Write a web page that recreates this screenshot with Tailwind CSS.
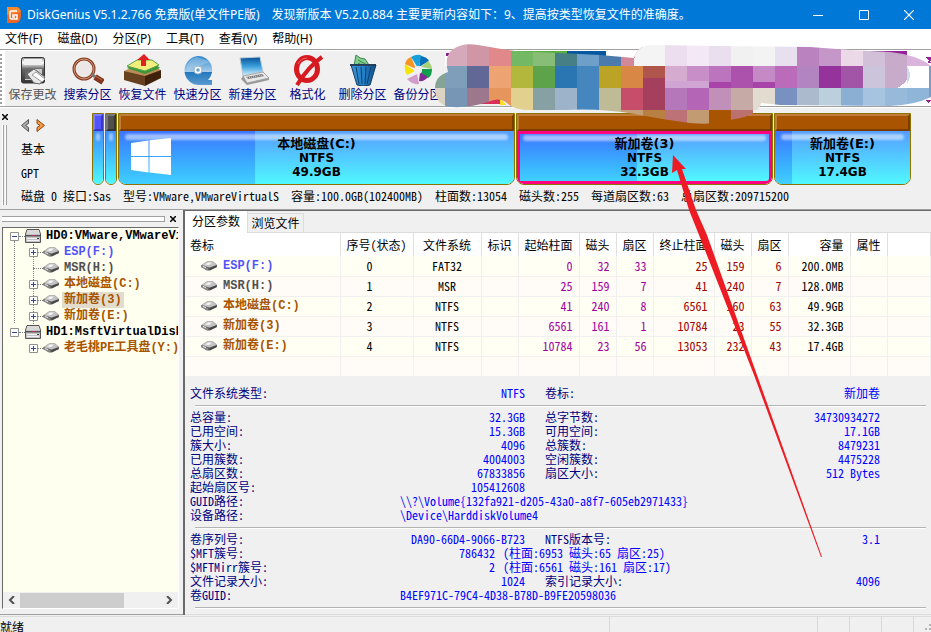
<!DOCTYPE html>
<html lang="zh-CN">

<head>
  <meta charset="UTF-8">
  <meta name="viewport" content="width=device-width, initial-scale=1.0">
  <title>DiskGenius V5.1.2.766 免费版(单文件PE版)</title>
  <script src="https://cdn.jsdelivr.net/npm/@tailwindcss/browser@4"></script>
</head>

<body class="relative flex flex-col h-screen overflow-hidden bg-[#f0f0f0] text-black text-[12px] leading-[14px] whitespace-nowrap font-['Noto_Sans_Mono_CJK_SC','Liberation_Mono','Noto_Sans_CJK_SC',monospace]">

  <!-- Shared icons -->
  <svg class="absolute w-0 h-0" aria-hidden="true">
    <symbol id="drive" viewBox="0 0 16 10">
      <path d="M0 4.500 6 .5h6l4 3.500v2L9 9.500H6L0 6z" fill="#666" />
      <path d="M.5 4 6 .8h6L15.500 4 8.500 6.500z" fill="#c4c4c4" />
      <path d="M4 3.500 7 1.500h4L8 4z" fill="#f5f5f5" />
      <path d="M0 4.500 7 7v2.500L0 6z" fill="#8a8a8a" />
      <path d="M8 7.500 15.500 4.500V6L9 9z" fill="#444" />
      <path d="M2 5.500 5 6.500" stroke="#eee" />
    </symbol>
    <symbol id="disk" viewBox="0 0 16 14">
      <path d="M2 .5h12L15.500 5v8.500H.5V5z" fill="#c4c4c4" stroke="#555" />
      <path d="M2 2h12M1.500 4h13" stroke="#eee" />
      <path d="M1 6h14v1.500H1z" fill="#555" />
      <path d="M2 9.500h12M2 11.500h12" stroke="#f2f2f2" />
      <path d="M7 6.500h3" stroke="#b36" />
      <path d="M12 9.500h2" stroke="#444" />
    </symbol>
    <symbol id="plus" viewBox="0 0 9 9">
      <path d="M.5.5h8v8h-8z" fill="#fff" stroke="#919191" />
      <path d="M2 4.500h5M4.500 2v5" stroke="#2c4a8c" />
    </symbol>
    <symbol id="minus" viewBox="0 0 9 9">
      <path d="M.5.5h8v8h-8z" fill="#fff" stroke="#919191" />
      <path d="M2 4.500h5" stroke="#2c4a8c" />
    </symbol>
    <linearGradient id="steel" x2="0" y2="1"><stop stop-color="#888" /><stop offset=".2" stop-color="#fff" /><stop offset=".45" stop-color="#666" /><stop offset="1" stop-color="#333" /></linearGradient>
    <linearGradient id="disc" x2="0" y2="1"><stop stop-color="#2f87cc" /><stop offset=".55" stop-color="#a9cdea" /><stop offset=".56" stop-color="#2377bd" /><stop offset="1" stop-color="#5b9bd0" /></linearGradient>
    <linearGradient id="screen" x2="0" y2="1"><stop stop-color="#064f96" /><stop offset=".5" stop-color="#3da1dc" /><stop offset="1" stop-color="#d9f1fc" /></linearGradient>
    <linearGradient id="bin" x2="1"><stop stop-color="#3d93d5" /><stop offset=".5" stop-color="#2380c8" /><stop offset="1" stop-color="#114e8a" /></linearGradient>
  </svg>

  <header class="flex items-center shrink-0 h-[29px] pl-[6px] bg-[#0078d7] text-white font-['Noto_Sans','Noto_Sans_CJK_SC',sans-serif]">
    <svg class="w-4 h-4 mr-[5px]" viewBox="0 0 16 16">
      <path d="M1 0h9c4 0 5 3 5 8s-2 8-6 8H1z" fill="#ef6524" />
      <path d="M1 0h9c3 0 4 2 5 5L1 8z" fill="#f8892d" />
      <path d="M11 4H5.500Q4 4 4 5.500v5Q4 12 5.500 12H11V8H7v2h2" fill="none" stroke="#fff" stroke-width="1.500" />
    </svg>
    <h1 class="flex grow gap-3"><span>DiskGenius V5.1.2.766 免费版(单文件PE版)</span><span>发现新版本 V5.2.0.884 主要更新内容如下：9、提高按类型恢复文件的准确度。</span></h1>
    <button type="button" aria-label="最小化" class="flex items-center justify-center w-[46px] h-full"><svg class="w-[10px] h-[10px]" viewBox="0 0 10 10"><path d="M0 5.500h10" stroke="#fff" /></svg></button>
    <button type="button" aria-label="最大化" class="flex items-center justify-center w-[45px] h-full"><svg class="w-[10px] h-[10px]" viewBox="0 0 10 10"><path d="M.5.5h9v9h-9z" fill="none" stroke="#fff" /></svg></button>
    <button type="button" aria-label="关闭" class="flex items-center justify-center w-[45px] h-full"><svg class="w-[10px] h-[10px]" viewBox="0 0 10 10"><path d="M0 0l10 10M10 0L0 10" stroke="#fff" stroke-width="1.200" /></svg></button>
  </header>

  <nav class="flex items-center shrink-0 h-5 pl-[5px] gap-[15px] bg-white font-['Noto_Sans','Noto_Sans_CJK_SC',sans-serif]">
    <button type="button">文件(F)</button>
    <button type="button">磁盘(D)</button>
    <button type="button">分区(P)</button>
    <button type="button">工具(T)</button>
    <button type="button">查看(V)</button>
    <button type="button">帮助(H)</button>
  </nav>

  <!-- Toolbar -->
  <section class="flex shrink-0 h-[58px] border-t border-b border-[#a0a0a0] text-[#000080]">
    <div class="w-[5px] pt-1 bg-white"><div class="h-[50px] w-[2px] border-l-2 border-dotted border-[#a0a0a0]"></div></div>
    <div class="flex border-t border-white">
      <button type="button" class="flex flex-col items-center w-[55px] pt-[3px] text-[#555]">
        <svg class="w-8 h-8 mb-px" viewBox="0 0 32 32">
          <path d="M4.500 5.500q0-2 2-2h19q2 0 2 2v22q0 1.500-2 1.500h-19q-2 0-2-1.500z" fill="url(#steel)" stroke="#333" />
          <path d="M7 5h18v6H7z" fill="#f0f0f0" />
          <path d="M8 15h17v11H8z" fill="#ccc" /><path d="M8 15h8v10H8z" fill="#666" />
          <path d="M10 20l7-5 11 8-5 7-6-1z" fill="#e8e8e8" stroke="#666" /><path d="M15 21l4-3 9 7-3 3z" fill="#fff" stroke="#999" />
        </svg>保存更改</button>
      <button type="button" class="flex flex-col items-center w-[55px] pt-[3px]">
        <svg class="w-8 h-8 mb-px" viewBox="0 0 32 32">
          <circle cx="12" cy="15" r="10" fill="#ece7e4" stroke="#843e24" stroke-width="3" />
          <circle cx="12" cy="15" r="10" fill="none" stroke="#d99574" />
          <path d="M20 20l3 3" stroke="#777" stroke-width="3" /><path d="M23 23l8 5" stroke="#84351d" stroke-width="6" /><path d="M23 22l7 4" stroke="#bf6a42" />
        </svg>搜索分区</button>
      <button type="button" class="flex flex-col items-center w-[55px] pt-[3px]">
        <svg class="w-[38px] h-8 mb-px" viewBox="0 0 38 32">
          <path d="M0 17l11-5h17l9 4-16 8z" fill="#b98b55" /><path d="M0 17l21 5v10L0 26z" fill="#67401f" /><path d="M21 22l16-6v8l-16 8z" fill="#3f210c" />
          <path d="M3 14l10-7h15l8 7-15 6z" fill="#3d963b" /><path d="M3 12l10-6h15l7 5-14 6z" fill="#f4ec7b" stroke="#55a54a" />
          <path d="M17 12V6h-4l7-6 6 6h-4v6z" fill="#e02024" />
        </svg>恢复文件</button>
      <button type="button" class="flex flex-col items-center w-[55px] pt-[3px]">
        <svg class="w-8 h-8 mb-px" viewBox="0 0 32 32">
          <path d="M16 2a14 14 0 0 1 10 24h4v5H18A14.500 14.500 0 1 1 16 2z" fill="url(#disc)" />
          <path d="M5 17q10-5 24-9L15 3Q4 5 5 17z" fill="#bfdcf2" opacity=".35" />
          <circle cx="16" cy="16" r="4" fill="#fff" stroke="#9bb8d0" /><circle cx="16" cy="16" r="1.800" fill="#68a3d3" />
        </svg>快速分区</button>
      <button type="button" class="flex flex-col items-center w-[55px] pt-[3px]">
        <svg class="w-8 h-8 mb-px" viewBox="0 0 32 32">
          <path d="M3 4l20-1 3 15-20 4z" fill="url(#screen)" stroke="#b9cbd5" /><path d="M6 22l20-4 6 6-22 5z" fill="#e9e9e9" stroke="#a8a8a8" />
          <path d="M6 22l4 7v2L4 25zM10 29l22-5v2l-22 5z" fill="#999" /><path d="M9 23l16-3 2 2-16 3z" fill="#777" /><path d="M10 24l16-3" stroke="#ddd" stroke-dasharray="1 1" />
        </svg>新建分区</button>
      <button type="button" class="flex flex-col items-center w-[55px] pt-[3px]">
        <svg class="w-8 h-8 mb-px" viewBox="0 0 32 32">
          <ellipse cx="15" cy="15" rx="10.500" ry="11.500" fill="none" stroke="#d71920" stroke-width="5" />
          <path d="M30 3Q17 12 5 31" fill="none" stroke="#d71920" stroke-width="4" /><path d="M6 10q3-6 9-6" fill="none" stroke="#f0666a" />
        </svg>格式化</button>
      <button type="button" class="flex flex-col items-center w-[55px] pt-[3px]">
        <svg class="w-8 h-8 mb-px" viewBox="0 0 32 32">
          <path d="M7 12L9 1q4 4 9 4l6 9z" fill="#83d08c" stroke="#3b7f50" /><path d="M11 6l9 5M11 9l6 3" stroke="#3b7f50" />
          <path d="M4 11h25l-6 20q-7 2-13 0z" fill="url(#bin)" stroke="#183a5c" /><path d="M3 11h26" stroke="#233f5b" stroke-width="2" />
          <path d="M9 13l3 17M14 13l1 17M19 13l-1 17M24 13l-4 17" stroke="#0d426e" stroke-width="1" />
        </svg>删除分区</button>
      <button type="button" class="flex flex-col items-center w-[55px] pt-[3px]">
        <svg class="w-8 h-8 mb-px" viewBox="0 0 32 32">
          <path d="M16 14L9 3q7-4 11-1z" fill="#16a1da" /><path d="M17 13l2-11q6 1 8 5z" fill="#0870b8" /><path d="M19 13l7-6q4 4 4 8z" fill="#a6d075" />
          <path d="M20 15h10q0 7-4 9l-7-5z" fill="#10a04d" /><path d="M18 18l8 5q-4 5-9 4z" fill="#832c91" /><path d="M15 20l2 10q-7 1-12-5z" fill="#d29cca" />
          <path d="M13 17l-8 4q-3-5-2-11z" fill="#f5e400" /><path d="M14 15L3 10q1-5 6-7z" fill="#f69325" /><circle cx="16" cy="16" r="4" fill="#eee" />
        </svg>备份分区</button>
    </div>
    <div class="grow bg-white"></div>
  </section>

  <!-- Disk map -->
  <section class="flex shrink-0 h-[103px] border-t border-t-white border-b border-b-[#a0a0a0]">
    <div class="w-[21px] pt-[6px]">
      <button type="button" aria-label="关闭" class="block ml-[2px]"><svg class="w-[6px] h-[6px]" viewBox="0 0 6 6"><path d="M0 0l6 6M6 0L0 6" stroke="#000" stroke-width="1.500" /></svg></button>
      <div class="flex gap-px w-[6px] h-20 mt-[5px] ml-[2px] *:w-[2px] *:border-r *:border-[#a0a0a0] *:bg-white"><i></i><i></i></div>
    </div>
    <div class="flex flex-col grow pr-5">
      <div class="flex pt-[5px]">
        <div class="w-[71px]">
          <div class="flex gap-[6px] pt-[6px]">
            <button type="button" aria-label="上一个磁盘"><svg class="block w-[9px] h-[13px]" viewBox="0 0 9 13"><path d="M7.500 .5v4l-3 2 3 2v4L.5 6.500z" fill="#aaa" stroke="#555" /></svg></button>
            <button type="button" aria-label="下一个磁盘"><svg class="block w-[9px] h-[13px]" viewBox="0 0 9 13"><path d="M1 .5v4l3 2-3 2v4l7.500-6z" fill="#f79646" stroke="#8a4b14" /></svg></button>
          </div>
          <p class="mt-[10px]">基本</p>
          <p class="mt-[10px]">GPT</p>
        </div>
        <div class="grow grid grid-cols-[12px_12px_397fr_257fr_137fr] gap-px h-[72px] text-center font-bold font-['DejaVu_Sans','Noto_Sans_CJK_SC',sans-serif]">
          <div class="flex flex-col border border-[#8c7300] rounded-b-lg overflow-hidden">
            <div class="h-[17px] border-2 border-t-[#7d7dff] border-l-[#7d7dff] border-r-[#3838c0] border-b-[#3838c0] bg-[#5252ff]"></div>
            <div class="relative grow bg-linear-to-b from-[#408cff] to-[#50f8ff]"><div class="absolute top-[2px] left-[3px] w-1 h-2 rounded-full bg-white/50 blur-[1px]"></div></div>
          </div>
          <div class="flex flex-col border border-[#8c7300] rounded-b-lg overflow-hidden">
            <div class="h-[17px] border-2 border-t-[#777] border-l-[#777] border-r-[#333] border-b-[#333] bg-[#505050]"></div>
            <div class="relative grow bg-linear-to-b from-[#408cff] to-[#50f8ff]"><div class="absolute top-[2px] left-[3px] w-1 h-2 rounded-full bg-white/50 blur-[1px]"></div></div>
          </div>
          <div class="flex flex-col border border-[#8c7300] rounded-b-lg overflow-hidden">
            <div class="h-[17px] border-2 border-t-[#c07c38] border-l-[#c07c38] border-r-[#7c3c00] border-b-[#7c3c00] bg-[#a85400]"></div>
            <div class="relative grow pt-[6px] bg-linear-to-b from-[#559cff] to-[#50f8ff]">
              <div class="absolute inset-y-0 left-0 bg-linear-to-b from-[#3c74ff] to-[#40d0ff]" style="width: 34.5%"></div>
              <div class="absolute top-[3px] inset-x-[6px] h-[6px] rounded-full bg-white/50 blur-[1px]"></div>
              <svg class="absolute left-3 top-[7px] w-10 h-[37px]" viewBox="0 0 40 37"><path d="M0 5l17.500-2.500V18H0zM18.500 2.300 40 0v18H18.500zM0 19h17.500v15.500L0 32zM18.500 19H40v18l-21.500-2.500z" fill="#fff" /></svg>
              <p class="relative"><span class="text-[13px]">本地磁盘(C:)</span><br>NTFS<br>49.9GB</p>
            </div>
          </div>
          <div class="flex flex-col border border-[#8c7300] rounded-b-lg overflow-hidden">
            <div class="h-[17px] border-2 border-t-[#c07c38] border-l-[#c07c38] border-r-[#7c3c00] border-b-[#7c3c00] bg-[#a85400]"></div>
            <div class="relative grow pt-[3px] border-3 border-[#ff0080] rounded-b-md bg-linear-to-b from-[#559cff] to-[#50f8ff]">
              <div class="absolute inset-y-0 left-0 bg-linear-to-b from-[#3c74ff] to-[#40d0ff]" style="width: 47%"></div>
              <div class="absolute top-[1px] inset-x-[3px] h-[6px] rounded-full bg-white/50 blur-[1px]"></div>
              <p class="relative"><span class="text-[13px]">新加卷(3)</span><br>NTFS<br>32.3GB</p>
            </div>
          </div>
          <div class="flex flex-col border border-[#8c7300] rounded-b-lg overflow-hidden">
            <div class="h-[17px] border-2 border-t-[#c07c38] border-l-[#c07c38] border-r-[#7c3c00] border-b-[#7c3c00] bg-[#a85400]"></div>
            <div class="relative grow pt-[6px] bg-linear-to-b from-[#559cff] to-[#50f8ff]">
              <div class="absolute inset-y-0 left-0 bg-linear-to-b from-[#3c74ff] to-[#40d0ff]" style="width: 12.6%"></div>
              <div class="absolute top-[3px] inset-x-[6px] h-[6px] rounded-full bg-white/50 blur-[1px]"></div>
              <p class="relative"><span class="text-[13px]">新加卷(E:)</span><br>NTFS<br>17.4GB</p>
            </div>
          </div>
        </div>
      </div>
      <p class="flex gap-3 mt-1"><span>磁盘 0 接口:Sas</span><span>型号:VMware,VMwareVirtualS</span><span>容量:100.0GB(102400MB)</span><span>柱面数:13054</span><span>磁头数:255</span><span>每道扇区数:63</span><span>总扇区数:209715200</span></p>
    </div>
  </section>

  <div class="flex grow min-h-0">
    <!-- Disk tree -->
    <aside class="flex flex-col shrink-0 w-[183px] border-b border-[#a0a0a0] pl-[2px] pr-1 pb-[5px]">
      <div class="flex items-center shrink-0 h-[17px]">
        <div class="w-[163px] h-[6px] mr-[5px] border-y border-r border-[#a0a0a0] bg-white"></div>
        <button type="button" aria-label="关闭"><svg class="block w-[6px] h-[6px]" viewBox="0 0 6 6"><path d="M0 0l6 6M6 0L0 6" stroke="#000" stroke-width="1.500" /></svg></button>
      </div>
      <div class="flex flex-col grow min-h-0 border border-t-[#696969] border-l-[#696969] border-r-white border-b-white bg-[#fffff0] overflow-hidden">
        <ul class="relative grow font-bold leading-4 overflow-hidden text-[#a85400] font-['Liberation_Mono','Noto_Sans_CJK_SC',monospace]">
          <li class="absolute left-[11px] top-[13px] h-[88px] border-l border-dotted border-[#808080]"></li>
          <li class="absolute left-[30px] top-4 h-24 border-l border-dotted border-[#808080]"></li>
          <li class="relative flex items-center h-4 pl-[7px] text-black"><svg class="w-[9px] h-[9px] shrink-0"><use href="#minus" /></svg><i class="shrink-0 w-[6px] border-t border-dotted border-[#808080]"></i><svg class="w-4 h-[14px] shrink-0 mr-[5px]"><use href="#disk" /></svg>HD0:VMware,VMwareVirtualS</li>
          <li class="relative flex items-center h-4 pl-[26px] text-[#5252ff]"><svg class="w-[9px] h-[9px] shrink-0"><use href="#plus" /></svg><i class="shrink-0 w-[5px] border-t border-dotted border-[#808080]"></i><svg class="w-4 h-[10px] mr-[5px] shrink-0"><use href="#drive" /></svg>ESP(F:)</li>
          <li class="relative flex items-center h-4 pl-[30px] text-[#505050]"><i class="shrink-0 w-[10px] border-t border-dotted border-[#808080]"></i><svg class="w-4 h-[10px] mr-[5px] shrink-0"><use href="#drive" /></svg>MSR(H:)</li>
          <li class="relative flex items-center h-4 pl-[26px]"><svg class="w-[9px] h-[9px] shrink-0"><use href="#plus" /></svg><i class="shrink-0 w-[5px] border-t border-dotted border-[#808080]"></i><svg class="w-4 h-[10px] mr-[5px] shrink-0"><use href="#drive" /></svg>本地磁盘(C:)</li>
          <li class="relative flex items-center h-4 pl-[26px]"><svg class="w-[9px] h-[9px] shrink-0"><use href="#plus" /></svg><i class="shrink-0 w-[5px] border-t border-dotted border-[#808080]"></i><svg class="w-4 h-[10px] mr-[3px] shrink-0"><use href="#drive" /></svg><span class="px-[2px] bg-[#e2dccd]">新加卷(3)</span></li>
          <li class="relative flex items-center h-4 pl-[26px]"><svg class="w-[9px] h-[9px] shrink-0"><use href="#plus" /></svg><i class="shrink-0 w-[5px] border-t border-dotted border-[#808080]"></i><svg class="w-4 h-[10px] mr-[5px] shrink-0"><use href="#drive" /></svg>新加卷(E:)</li>
          <li class="relative flex items-center h-4 pl-[7px] text-black bg-[#fffff0]"><svg class="w-[9px] h-[9px] shrink-0"><use href="#minus" /></svg><i class="shrink-0 w-[6px] border-t border-dotted border-[#808080]"></i><svg class="w-4 h-[14px] shrink-0 mr-[5px]"><use href="#disk" /></svg>HD1:MsftVirtualDisk</li>
          <li class="relative flex items-center h-4 pl-[26px]"><svg class="w-[9px] h-[9px] shrink-0"><use href="#plus" /></svg><i class="shrink-0 w-[5px] border-t border-dotted border-[#808080]"></i><svg class="w-4 h-[10px] mr-[5px] shrink-0"><use href="#drive" /></svg>老毛桃PE工具盘(Y:)</li>
        </ul>
        <div class="flex items-center shrink-0 h-4 px-[5px] bg-[#f0f0f0]">
          <svg class="w-2 h-2 mr-1" viewBox="0 0 8 8"><path d="M6 0L2 4l4 4" fill="none" stroke="#505050" stroke-width="2" /></svg>
          <div class="w-[104px] h-[15px] bg-[#cdcdcd]"></div>
          <svg class="w-2 h-2 ml-auto" viewBox="0 0 8 8"><path d="M2 0l4 4-4 4" fill="none" stroke="#505050" stroke-width="2" /></svg>
        </div>
      </div>
    </aside>

    <main class="flex flex-col grow min-w-0 border-l-2 border-t border-[#696969]">
      <div class="flex items-end shrink-0 h-[22px] border-b border-[#dcdcdc]">
        <button type="button" class="self-stretch w-[63px] -mb-px pb-[3px] bg-white border-r border-[#dcdcdc]">分区参数</button>
        <button type="button" class="h-[19px] w-[56px] border-t border-r border-[#dcdcdc]">浏览文件</button>
      </div>

      <table class="w-full table-fixed text-right">
        <colgroup>
          <col class="w-[155px]"><col class="w-[73px]"><col class="w-[68px]"><col class="w-[37px]"><col class="w-[61px]"><col class="w-[37px]"><col class="w-[37px]"><col class="w-[61px]"><col class="w-[37px]"><col class="w-[37px]"><col class="w-[62px]"><col class="w-[37px]"><col>
        </colgroup>
        <thead>
          <tr class="h-[23px] bg-white *:font-normal *:p-0 *:border-r *:border-[#e0e0e0]">
            <th class="text-left"><span class="pl-[5px]">卷标</span></th>
            <th class="text-center">序号(状态)</th>
            <th class="text-center">文件系统</th>
            <th class="text-center">标识</th>
            <th class="text-center">起始柱面</th>
            <th class="text-center">磁头</th>
            <th class="text-center">扇区</th>
            <th class="text-center">终止柱面</th>
            <th class="text-center">磁头</th>
            <th class="text-center">扇区</th>
            <th><span class="pr-[6px]">容量</span></th>
            <th class="text-center">属性</th>
            <td></td>
          </tr>
        </thead>
        <tbody class="*:h-5 *:odd:bg-[#fffff4] *:even:bg-[#fffcf8] *:*:border-r *:*:border-b *:*:border-[#f0f0f0] *:*:pr-[6px] [&>tr>td:nth-child(2)]:pr-[14px] [&>tr>td:nth-child(3)]:pr-0">
          <tr>
            <td class="font-bold text-[#5252ff] font-['Liberation_Mono','Noto_Sans_CJK_SC',monospace]"><div class="flex items-center gap-[6px] pl-4"><svg class="w-4 h-[10px]"><use href="#drive" /></svg>ESP(F:)</div></td>
            <td class="text-center">0</td><td class="text-center">FAT32</td><td></td>
            <td class="text-[#a000a0]">0</td><td class="text-[#a000a0]">32</td><td class="text-[#a000a0]">33</td>
            <td class="text-[#a00000]">25</td><td class="text-[#a00000]">159</td><td class="text-[#a00000]">6</td>
            <td>200.0MB</td><td></td><td></td>
          </tr>
          <tr>
            <td class="font-bold text-[#505050] font-['Liberation_Mono','Noto_Sans_CJK_SC',monospace]"><div class="flex items-center gap-[6px] pl-4"><svg class="w-4 h-[10px]"><use href="#drive" /></svg>MSR(H:)</div></td>
            <td class="text-center">1</td><td class="text-center">MSR</td><td></td>
            <td class="text-[#a000a0]">25</td><td class="text-[#a000a0]">159</td><td class="text-[#a000a0]">7</td>
            <td class="text-[#a00000]">41</td><td class="text-[#a00000]">240</td><td class="text-[#a00000]">7</td>
            <td>128.0MB</td><td></td><td></td>
          </tr>
          <tr>
            <td class="font-bold text-[#a85400] font-['Liberation_Mono','Noto_Sans_CJK_SC',monospace]"><div class="flex items-center gap-[6px] pl-4"><svg class="w-4 h-[10px]"><use href="#drive" /></svg>本地磁盘(C:)</div></td>
            <td class="text-center">2</td><td class="text-center">NTFS</td><td></td>
            <td class="text-[#a000a0]">41</td><td class="text-[#a000a0]">240</td><td class="text-[#a000a0]">8</td>
            <td class="text-[#a00000]">6561</td><td class="text-[#a00000]">160</td><td class="text-[#a00000]">63</td>
            <td>49.9GB</td><td></td><td></td>
          </tr>
          <tr>
            <td class="font-bold text-[#a85400] font-['Liberation_Mono','Noto_Sans_CJK_SC',monospace]"><div class="flex items-center gap-[6px] pl-4"><svg class="w-4 h-[10px]"><use href="#drive" /></svg>新加卷(3)</div></td>
            <td class="text-center">3</td><td class="text-center">NTFS</td><td></td>
            <td class="text-[#a000a0]">6561</td><td class="text-[#a000a0]">161</td><td class="text-[#a000a0]">1</td>
            <td class="text-[#a00000]">10784</td><td class="text-[#a00000]">23</td><td class="text-[#a00000]">55</td>
            <td>32.3GB</td><td></td><td></td>
          </tr>
          <tr>
            <td class="font-bold text-[#a85400] font-['Liberation_Mono','Noto_Sans_CJK_SC',monospace]"><div class="flex items-center gap-[6px] pl-4"><svg class="w-4 h-[10px]"><use href="#drive" /></svg>新加卷(E:)</div></td>
            <td class="text-center">4</td><td class="text-center">NTFS</td><td></td>
            <td class="text-[#a000a0]">10784</td><td class="text-[#a000a0]">23</td><td class="text-[#a000a0]">56</td>
            <td class="text-[#a00000]">13053</td><td class="text-[#a00000]">232</td><td class="text-[#a00000]">43</td>
            <td>17.4GB</td><td></td><td></td>
          </tr>
          <tr><td></td><td></td><td></td><td></td><td></td><td></td><td></td><td></td><td></td><td></td><td></td><td></td><td></td></tr>
        </tbody>
      </table>

      <!-- Volume details -->
      <section class="grow min-h-0 px-[5px] pt-[9px] text-[#0000ff] border-b border-[#dcdcdc]">
        <dl class="grid grid-cols-[210px_125px_20px_210px_125px] [&_dt]:text-[#000080] [&_dd]:text-right">
          <dt>文件系统类型:</dt><dd>NTFS</dd><dt class="col-start-4">卷标:</dt><dd>新加卷</dd>
        </dl>
        <hr class="h-[2px] mt-[5px] mb-[3px] ml-[5px] border-t-[#b4b4b4] border-b border-b-white">
        <dl class="grid grid-cols-[210px_125px_20px_210px_125px] [&_dt]:text-[#000080] [&_dd]:text-right">
          <dt>总容量:</dt><dd>32.3GB</dd><dt class="col-start-4">总字节数:</dt><dd>34730934272</dd>
          <dt>已用空间:</dt><dd>15.3GB</dd><dt class="col-start-4">可用空间:</dt><dd>17.1GB</dd>
          <dt>簇大小:</dt><dd>4096</dd><dt class="col-start-4">总簇数:</dt><dd>8479231</dd>
          <dt>已用簇数:</dt><dd>4004003</dd><dt class="col-start-4">空闲簇数:</dt><dd>4475228</dd>
          <dt>总扇区数:</dt><dd>67833856</dd><dt class="col-start-4">扇区大小:</dt><dd>512 Bytes</dd>
          <dt>起始扇区号:</dt><dd>105412608</dd>
          <dt class="col-start-1">GUID路径:</dt><dd class="col-span-4"><p class="text-left">\\?\Volume{132fa921-d205-43a0-a8f7-605eb2971433}</p></dd>
          <dt>设备路径:</dt><dd class="col-span-4"><p class="text-left">\Device\HarddiskVolume4</p></dd>
        </dl>
        <hr class="h-[2px] mt-[5px] mb-[3px] ml-[5px] border-t-[#b4b4b4] border-b border-b-white">
        <dl class="grid grid-cols-[210px_125px_20px_210px_125px] [&_dt]:text-[#000080] [&_dd]:text-right">
          <dt>卷序列号:</dt><dd>DA90-66D4-9066-B723</dd><dt class="col-start-4">NTFS版本号:</dt><dd>3.1</dd>
          <dt>$MFT簇号:</dt><dd class="col-span-4 flex gap-2"><span class="w-[95px]">786432</span><span>(柱面:6953 磁头:65 扇区:25)</span></dd>
          <dt>$MFTMirr簇号:</dt><dd class="col-span-4 flex gap-2"><span class="w-[95px]">2</span><span>(柱面:6561 磁头:161 扇区:17)</span></dd>
          <dt>文件记录大小:</dt><dd>1024</dd><dt class="col-start-4">索引记录大小:</dt><dd>4096</dd>
          <dt>卷GUID:</dt><dd class="col-span-4"><p class="text-left">B4EF971C-79C4-4D38-B78D-B9FE20598036</p></dd>
        </dl>
        <hr class="h-[2px] mt-[5px] mb-[3px] ml-[5px] border-t-[#b4b4b4] border-b border-b-white">
      </section>
    </main>
  </div>

  <footer class="flex shrink-0 h-4 mt-px border-t border-[#dcdcdc] font-['Noto_Sans_CJK_SC',sans-serif]">
    <p class="grow pt-[3px]">就绪</p>
    <div class="w-[208px] border-l border-[#d7d7d7]"></div>
    <div class="w-8 border-l border-[#d7d7d7]"></div>
    <div class="w-8 border-l border-[#d7d7d7]"></div>
    <div class="w-8 border-l border-[#d7d7d7]"></div>
    <div class="flex items-end justify-end w-[18px] border-l border-[#d7d7d7]"><svg class="w-[6px] h-[6px] mb-[2px]" viewBox="0 0 6 6"><path d="M4 0h2v2H4zM0 4h2v2H0zM4 4h2v2H4z" fill="#b4b4b4" /></svg></div>
  </footer>

  <!-- Pixelated banner lying over the toolbar and the disk map -->
  <svg class="absolute left-[423px] top-[40px] w-[508px] h-[90px]" viewBox="423 40 508 90" aria-hidden="true" shape-rendering="crispEdges">
    <path d="M445 51h6l-4 6z" fill="#8a1b8a" />
    <path d="M445 51h70v2h-70zM445 66h90v40h-90z" fill="#f0f0f0" />
    <path d="M515 51h52v6h-52z" fill="#5cae3c" /><path d="M567 51h39v8h-39z" fill="#0858a0" />
    <path d="M476 104l24-6v6z" fill="#d82e5a" /><path d="M500 99l6 6h-6z" fill="#fd2" />
    <path d="M855 51h52v4h-52z" fill="#96229a" /><path d="M926 57h5v4h-3v2h3M925 100h6l-3 3z" fill="#96229a" />
    <clipPath id="cloud"><path d="M435 88Q435 76 448 72 444 57 452 50 462 42 478 45 500 49 515 51L600 55 634 58Q638 44 655 45L720 46 810 47 850 50 890 52Q918 55 931 66V97Q915 105 890 106L780 105 761 103Q759 114 740 118L725 121Q710 125 690 123 660 119 635 114 600 108 565 110L530 110Q515 110 508 104 500 96 488 102 470 108 452 107 435 106 435 88z" /></clipPath>
    <g clip-path="url(#cloud)">
      <path d="M423 44h22v44h-22z" fill="#85a496" /><path d="M423 88h22v22h-22z" fill="#dbd2c2" />
      <path d="M445 40h22v26h-22z" fill="#d5a9b9" /><path d="M445 66h22v22h-22z" fill="#7f9eba" /><path d="M445 88h22v22h-22z" fill="#7796b5" />
      <path d="M467 40h22v26h-22z" fill="#d196a6" /><path d="M467 66h22v22h-22z" fill="#616896" /><path d="M467 88h22v22h-22z" fill="#9d788c" />
      <path d="M489 40h22v26h-22z" fill="#e0888a" /><path d="M489 66h22v22h-22z" fill="#eda472" /><path d="M489 88h22v22h-22z" fill="#e6955c" />
      <path d="M511 40h22v26h-22z" fill="#72b865" /><path d="M511 66h22v22h-22z" fill="#b2b83c" /><path d="M511 88h22v22h-22z" fill="#e2d08f" />
      <path d="M533 40h22v26h-22z" fill="#88bd78" /><path d="M533 66h22v22h-22z" fill="#5ea34a" /><path d="M533 88h22v22h-22z" fill="#86a0a4" />
      <path d="M555 40h22v26h-22z" fill="#467f85" /><path d="M555 66h22v22h-22z" fill="#2a76b3" /><path d="M555 88h22v22h-22z" fill="#9cb3ca" />
      <path d="M577 40h22v26h-22z" fill="#6e9fc8" /><path d="M577 66h22v44h-22z" fill="#4586bf" />
      <path d="M599 40h22v26h-22z" fill="#4a7bac" /><path d="M599 66h22v22h-22z" fill="#bba326" /><path d="M599 88h22v24h-22z" fill="#bebb96" />
      <path d="M621 40h22v26h-22z" fill="#d28898" /><path d="M621 66h22v22h-22z" fill="#d98744" /><path d="M621 88h22v22h-22z" fill="#c64e6b" /><path d="M621 110h22v16h-22z" fill="#c4a07a" />
      <path d="M665 40v26h-31q-1-20 16-22z" fill="#f4f4f4" /><path d="M643 66h22v22h-22z" fill="#b0564d" /><path d="M643 78h22v32h-22z" fill="#a53f5e" /><path d="M643 110h22v16h-22z" fill="#b98044" />
      <path d="M665 40h22v26h-22z" fill="#ecdeee" /><path d="M665 66h22v22h-22z" fill="#d5accf" /><path d="M665 88h22v22h-22z" fill="#b377ba" /><path d="M665 110h22v16h-22z" fill="#bd7277" />
      <path d="M687 40h22v26h-22z" fill="#f2e8f6" /><path d="M687 66h22v22h-22z" fill="#c78ec8" /><path d="M687 88h22v22h-22z" fill="#b565b5" /><path d="M687 110h22v16h-22z" fill="#c39b72" />
      <path d="M709 40h22v26h-22z" fill="#eadfee" /><path d="M709 66h22v22h-22z" fill="#bd74be" /><path d="M709 88h22v22h-22z" fill="#c090b8" /><path d="M709 110h22v16h-22z" fill="#a85400" />
      <path d="M731 40h22v26h-22z" fill="#f1f1f2" /><path d="M731 66h22v22h-22z" fill="#ac52ad" /><path d="M731 88h22v22h-22z" fill="#c6aaa6" /><path d="M731 110h22v16h-22z" fill="#bd7070" />
      <path d="M753 40h22v26h-22z" fill="#f3f3f4" /><path d="M753 66h22v22h-22z" fill="#c58ac6" /><path d="M753 88h22v22h-22z" fill="#e1dbd0" />
      <path d="M775 40h22v26h-22z" fill="#e9e0ef" /><path d="M775 66h22v22h-22z" fill="#ba6bba" /><path d="M775 88h22v22h-22z" fill="#7891c0" />
      <path d="M797 40h22v26h-22z" fill="#ba82bf" /><path d="M797 66h22v22h-22z" fill="#b284c0" /><path d="M797 88h22v22h-22z" fill="#acbace" />
      <path d="M819 40h22v26h-22z" fill="#c596c8" /><path d="M819 66h22v22h-22z" fill="#96329b" /><path d="M819 88h22v22h-22z" fill="#bbcfdd" />
      <path d="M841 40h22v26h-22z" fill="#ecd9e8" /><path d="M841 66h22v22h-22z" fill="#a255a7" /><path d="M841 88h22v22h-22z" fill="#8aafd2" />
      <path d="M863 40h22v26h-22z" fill="#d2c0d8" /><path d="M863 66h22v22h-22z" fill="#ccc4da" /><path d="M863 88h22v22h-22z" fill="#a6c4e0" />
      <path d="M885 40h22v48h-22z" fill="#c8aacb" /><path d="M885 88h22v22h-22z" fill="#98bada" />
      <path d="M907 40h24v26h-24z" fill="#dab4dc" /><path d="M907 66h22v22h-32q16-8 10-22z" fill="#fff" /><path d="M907 66q6 8 0 18z" fill="#cddcea" /><path d="M907 88h22v22h-22z" fill="#8fb5d8" /><path d="M929 66h2v44h-2z" fill="#7b9bcc" />
      <path d="M665 81h44v7h-44z" fill="#d0a4d3" /><path d="M709 82h22v6h-22zM753 82h22v6h-22z" fill="#a843a9" />
    </g>
  </svg>

  <!-- Annotation arrow -->
  <svg class="absolute left-[670px] top-[150px] w-[156px] h-[412px] pointer-events-none" viewBox="670 150 156 412" aria-hidden="true">
    <path d="M673 155l13 14-4 0 14 41 11 25 50 140 65 182-1 0-67-182-55-140-10-25-12-40-5 3z" fill="#ed1c24" />
  </svg>
</body>

</html>
